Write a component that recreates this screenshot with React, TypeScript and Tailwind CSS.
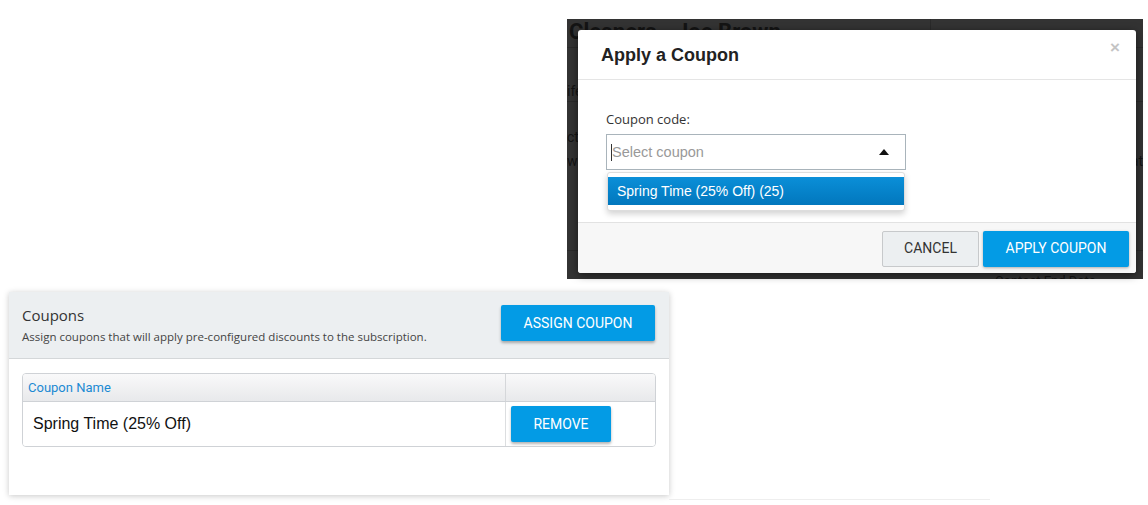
import React from 'react';

function Backdrop() {
  // what lies behind the modal overlay, darkened
  return (
    <div className="absolute inset-0 overflow-hidden text-[#141414]" style={{ fontFamily: 'Roboto, "Liberation Sans", sans-serif' }}>
      <div className="absolute left-[2px] top-[2px] text-[22px] font-bold leading-none whitespace-nowrap">Cleaners - Joe Brown</div>
      <div className="absolute left-0 right-0 top-[28px] border-t border-[#2a2a2a]" />
      <div className="absolute left-[363px] top-0 h-[28px] border-l border-[#2a2a2a]" />
      <div className="absolute left-0 top-[62px] text-[14px]">ife</div>
      <div className="absolute left-0 right-0 top-[82px] border-t border-[#2a2a2a]" />
      <div className="absolute left-0 top-[108px] text-[14px]">ct</div>
      <div className="absolute left-0 top-[132px] text-[14px]">w</div>
      <div className="absolute right-0 top-[132px] text-[14px]">at</div>
      <div className="absolute left-0 right-0 top-[231px] border-t border-[#2a2a2a]" />
      <div className="absolute left-[428px] top-[254px] text-[13px] leading-[15px] whitespace-nowrap">Contact End Date</div>
    </div>
  );
}

function CouponModal() {
  return (
    <div className="relative w-[576px] h-[260px] bg-[#333333] pt-[11px] pl-[11px]">
      <Backdrop />
      <div className="relative w-[558px] h-[243px] bg-white rounded-[3px] shadow-[0_2px_8px_rgba(0,0,0,0.5)] flex flex-col">
        <div className="h-[50px] flex items-center justify-between px-[23px] border-b border-[#e5e5e5]">
          <h2 className="text-[18px] font-bold text-[#222] pt-[2px]" style={{ fontFamily: '"Liberation Sans", Arial, sans-serif' }}>Apply a Coupon</h2>
          <span className="text-[#c4c4c4] text-[17px] font-bold leading-none -mt-[14px] -mr-[7px]" style={{ fontFamily: '"Liberation Sans", Arial, sans-serif' }}>×</span>
        </div>
        <div className="flex-1 pl-[28px] pt-[33px]">
          <label className="block text-[13px] text-[#333] leading-none mb-[8px]" style={{ fontFamily: '"Open Sans", sans-serif' }}>Coupon code:</label>
          <div className="w-[300px] h-[36px] border border-[#a9b4bb] flex items-center justify-between pl-[4px] pr-[16px]">
            <span className="text-[14.5px] text-[#999] border-l border-[#333] leading-[17px]" style={{ fontFamily: '"Liberation Sans", Arial, sans-serif' }}>Select coupon</span>
            <svg width="10" height="6" viewBox="0 0 10 6"><path d="M0 6 L5 0 L10 6 Z" fill="#111" /></svg>
          </div>
          <div className="w-[298px] mt-[2px] ml-[1px] bg-white rounded-[3px] border border-[#ddd] shadow-[0_3px_6px_rgba(0,0,0,0.18)] pt-[4px] pb-[5px]">
            <div className="h-[28px] bg-gradient-to-b from-[#0b8fd8] to-[#0277bd] text-white text-[14px] flex items-center pl-[9px]" style={{ fontFamily: '"Liberation Sans", Arial, sans-serif' }}>
              Spring Time (25% Off) (25)
            </div>
          </div>
        </div>
        <div className="h-[51px] bg-[#f7f7f7] border-t border-[#e2e2e2] rounded-b-[3px] flex items-center justify-end gap-[4px] pr-[7px] pt-[1px]" style={{ fontFamily: 'Roboto, "Liberation Sans", sans-serif' }}>
          <button className="w-[97px] h-[36px] bg-[#eceff1] border border-[#c7c9cb] rounded-[2px] text-[14px] text-[#333]">CANCEL</button>
          <button className="w-[146px] h-[36px] bg-[#039be5] rounded-[2px] text-[14px] text-white shadow-[0_1px_3px_rgba(0,0,0,0.3)]">APPLY COUPON</button>
        </div>
      </div>
    </div>
  );
}

function CouponsPanel() {
  return (
    <div className="w-[660px] h-[203px] bg-white shadow-[0_1px_6px_rgba(0,0,0,0.22)]">
      <div className="h-[67px] bg-[#eceff1] border-b border-[#d4d7d9] flex items-start justify-between pl-[13px] pr-[14px]" style={{ fontFamily: '"Open Sans", sans-serif' }}>
        <div className="pt-[13px]">
          <h3 className="text-[15px] text-[#333] leading-[20px]">Coupons</h3>
          <p className="text-[11.5px] text-[#444] leading-[18px] mt-[3px]">Assign coupons that will apply pre-configured discounts to the subscription.</p>
        </div>
        <button className="mt-[13px] w-[154px] h-[36px] bg-[#039be5] rounded-[2px] text-white text-[14px] shadow-[0_2px_3px_rgba(0,0,0,0.3)]" style={{ fontFamily: 'Roboto, sans-serif' }}>ASSIGN COUPON</button>
      </div>
      <div className="px-[13px] pt-[14px]">
        <div className="border border-[#cfd2d6] rounded-[4px] overflow-hidden">
          <div className="flex h-[28px] bg-gradient-to-b from-[#f9f9fa] to-[#e8e9eb] border-b border-[#cfd2d6]">
            <div className="w-[483px] border-r border-[#d5d7da] flex items-center pl-[5px] text-[13px] text-[#1b8ad3]" style={{ fontFamily: 'Roboto, sans-serif' }}>Coupon Name</div>
            <div className="flex-1" />
          </div>
          <div className="flex h-[44px] bg-white">
            <div className="w-[483px] border-r border-[#dcdee0] flex items-center pl-[10px] text-[16px] text-[#111]" style={{ fontFamily: '"Liberation Sans", Arial, sans-serif' }}>Spring Time (25% Off)</div>
            <div className="flex-1 flex items-center pl-[5px]">
              <button className="w-[100px] h-[36px] bg-[#039be5] rounded-[2px] text-white text-[14px] shadow-[0_2px_3px_rgba(0,0,0,0.3)]" style={{ fontFamily: 'Roboto, sans-serif' }}>REMOVE</button>
            </div>
          </div>
        </div>
      </div>
    </div>
  );
}

export default function App() {
  return (
    <div className="w-[1148px] h-[505px] bg-white overflow-hidden">
      <div className="pt-[19px] pl-[567px]">
        <CouponModal />
      </div>
      <div className="flex items-end pl-[9px] pt-[13px]">
        <CouponsPanel />
        <div className="w-[321px] mb-[-5px] border-b border-[#eeeeee]" />
      </div>
    </div>
  );
}
